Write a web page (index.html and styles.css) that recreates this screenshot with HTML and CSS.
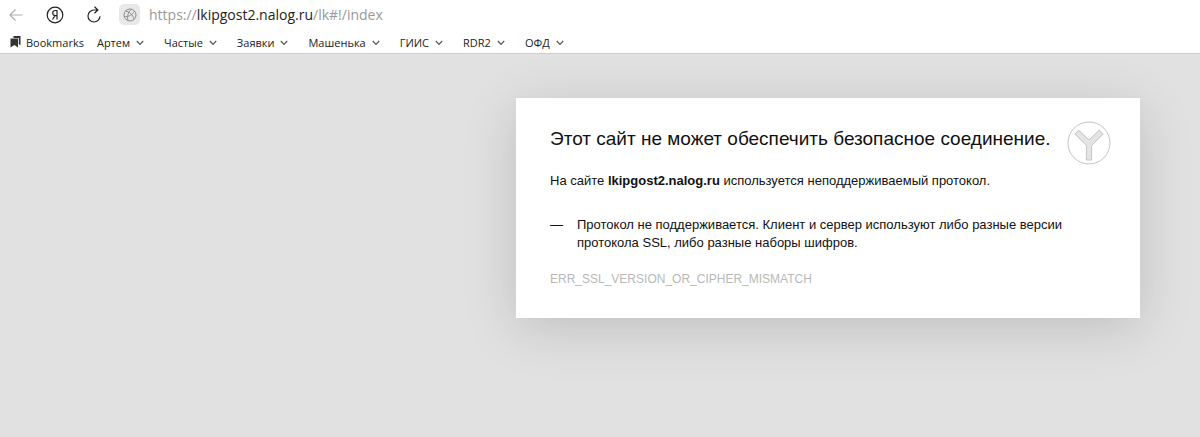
FILE: index.html
```html
<!DOCTYPE html>
<html lang="ru">
<head>
    <meta charset="UTF-8">
    <meta name="viewport" content="width=device-width, initial-scale=1.0">
    <title>lkipgost2.nalog.ru</title>
    <link rel="stylesheet" href="styles.css">
</head>
<body>
    <header class="browser">
        <div class="toolbar">
            <button class="icon-btn back" aria-label="Назад">
                <svg width="14" height="14" viewBox="0 0 14 14"><path d="M13.500 7H1M6.500 1.500L1 7l5.500 5.500"/></svg>
            </button>
            <button class="icon-btn" aria-label="Яндекс">
                <svg width="18" height="18" viewBox="0 0 18 18"><circle cx="9" cy="9" r="7.800"/><path d="M11 13.500V4.500H9.400C7.700 4.500 6.700 5.600 6.700 7.100c0 1.600 1 2.500 2.600 2.500H11M9 9.700L6.500 13.500"/></svg>
            </button>
            <button class="icon-btn" aria-label="Обновить">
                <svg width="16" height="18" viewBox="0 0 16 18"><path d="M14 10.200A6 6 0 1 1 8 4H11.500M8.500 .8L11.900 4 8.500 7.200"/></svg>
            </button>
            <button class="icon-btn site" aria-label="О сайте">
                <svg width="14" height="14" viewBox="0 0 14 14"><circle cx="7" cy="7" r="6"/><path d="M2.500 3C6 3.500 10 6.500 11 11.300M1.300 8.500C4.500 9.200 9 7.500 11.500 3M8.500 1.300C5 4 3.800 8.500 5 12.600"/></svg>
            </button>
            <a class="url" href="#">https://<span class="host">lkipgost2.nalog.ru</span>/lk#!/index</a>
        </div>
        <nav class="bookmarks">
            <button class="bookmark all">
                <svg class="flags" width="11" height="12" viewBox="0 0 11 12"><path d="M3.500 0H10.500V9.500L8.800 8V2H3.500z"/><path d="M.5 2.500H8V11.500L4.500 9 .5 11.500z"/></svg>
                Bookmarks
            </button>
            <button class="bookmark">Артем <svg class="chevron" width="8" height="6" viewBox="0 0 8 6"><path d="M.8 1L4 4.300 7.200 1"/></svg></button>
            <button class="bookmark">Частые <svg class="chevron" width="8" height="6" viewBox="0 0 8 6"><path d="M.8 1L4 4.300 7.200 1"/></svg></button>
            <button class="bookmark">Заявки <svg class="chevron" width="8" height="6" viewBox="0 0 8 6"><path d="M.8 1L4 4.300 7.200 1"/></svg></button>
            <button class="bookmark">Машенька <svg class="chevron" width="8" height="6" viewBox="0 0 8 6"><path d="M.8 1L4 4.300 7.200 1"/></svg></button>
            <button class="bookmark">ГИИС <svg class="chevron" width="8" height="6" viewBox="0 0 8 6"><path d="M.8 1L4 4.300 7.200 1"/></svg></button>
            <button class="bookmark">RDR2 <svg class="chevron" width="8" height="6" viewBox="0 0 8 6"><path d="M.8 1L4 4.300 7.200 1"/></svg></button>
            <button class="bookmark">ОФД <svg class="chevron" width="8" height="6" viewBox="0 0 8 6"><path d="M.8 1L4 4.300 7.200 1"/></svg></button>
        </nav>
    </header>
    <main class="page">
        <section class="card">
            <div class="card-head">
                <h1>Этот сайт не может обеспечить безопасное соединение.</h1>
                <svg class="logo" width="44" height="44" viewBox="0 0 44 44">
                    <circle cx="22" cy="22" r="21"/>
                    <path d="M7.800 13L11.800 9.200 22 19 32.200 9.200 36.200 13 24.600 24.500V39H19.400V24.500z"/>
                </svg>
            </div>
            <p>На сайте <strong>lkipgost2.nalog.ru</strong> используется неподдерживаемый протокол.</p>
            <ul class="reasons">
                <li>Протокол не поддерживается. Клиент и сервер используют либо разные версии протокола SSL, либо разные наборы шифров.</li>
            </ul>
            <div class="code">ERR_SSL_VERSION_OR_CIPHER_MISMATCH</div>
        </section>
    </main>
</body>
</html>
```

FILE: styles.css
```css
* {
    box-sizing: border-box;
}
body {
    margin: 0;
    min-height: 100vh;
    display: flex;
    flex-direction: column;
    background-color: #e1e1e1;
    font-family: "Liberation Sans", Arial, sans-serif;
    font-size: 13px;
    color: #111;
}
button {
    padding: 0;
    border: none;
    background: none;
    color: inherit;
    font: inherit;
    cursor: pointer;
}
.browser {
    background-color: #fff;
    border-bottom: 1px solid #cfcfcf;
    font-family: "Open Sans", "Noto Sans", sans-serif;
}
.toolbar {
    display: flex;
    align-items: center;
    height: 29px;
    padding-left: 5px;
    gap: 18px;
}
.icon-btn {
    display: flex;
    align-items: center;
    justify-content: center;
    width: 21px;
    height: 21px;
}
.icon-btn svg {
    fill: none;
    stroke: #222;
    stroke-width: 1.2;
}
.icon-btn.back svg {
    stroke: #b0b0b0;
}
.icon-btn.site {
    margin-left: -3px;
    border-radius: 5px;
    background-color: #e8e8e8;
}
.icon-btn.site svg {
    stroke: #8c8c8c;
    stroke-width: 1;
}
.url {
    margin-left: -9px;
    color: #999;
    font-size: 14px;
    text-decoration: none;
}
.host {
    color: #222;
}
.bookmarks {
    display: flex;
    align-items: center;
    height: 24px;
    padding-left: 10px;
    padding-top: 2px;
    gap: 20px;
    font-size: 11px;
    color: #222;
}
.bookmark {
    display: flex;
    align-items: center;
    gap: 6px;
}
.bookmark.all {
    gap: 5px;
    margin-right: -7px;
}
.flags {
    fill: #333;
}
.chevron {
    margin-top: 2px;
    fill: none;
    stroke: #555;
    stroke-width: 1.2;
}
.page {
    flex: 1;
    padding: 44px 60px;
}
.card {
    max-width: 624px;
    margin-left: auto;
    padding: 23px 29px 30px 34px;
    background-color: #fff;
    box-shadow: 0 10px 50px rgba(0, 0, 0, 0.15);
}
.card-head {
    display: flex;
    justify-content: space-between;
    align-items: flex-start;
}
.card h1 {
    margin: 7px 0 0;
    font-size: 19px;
    font-weight: normal;
    line-height: 22px;
}
.logo {
    flex-shrink: 0;
    stroke: #c4c4c4;
    fill: none;
}
.logo path {
    fill: #e4e4e4;
    stroke-linejoin: round;
}
.card p {
    margin: 7px 0 26px;
    line-height: 18px;
}
.reasons {
    margin: 0 0 18px;
    padding: 0;
    list-style: none;
    line-height: 18px;
}
.reasons li {
    display: flex;
    gap: 14px;
    padding-right: 30px;
}
.reasons li::before {
    content: "—";
}
.code {
    color: #b8b8b8;
    font-size: 12px;
    line-height: 18px;
}
```
